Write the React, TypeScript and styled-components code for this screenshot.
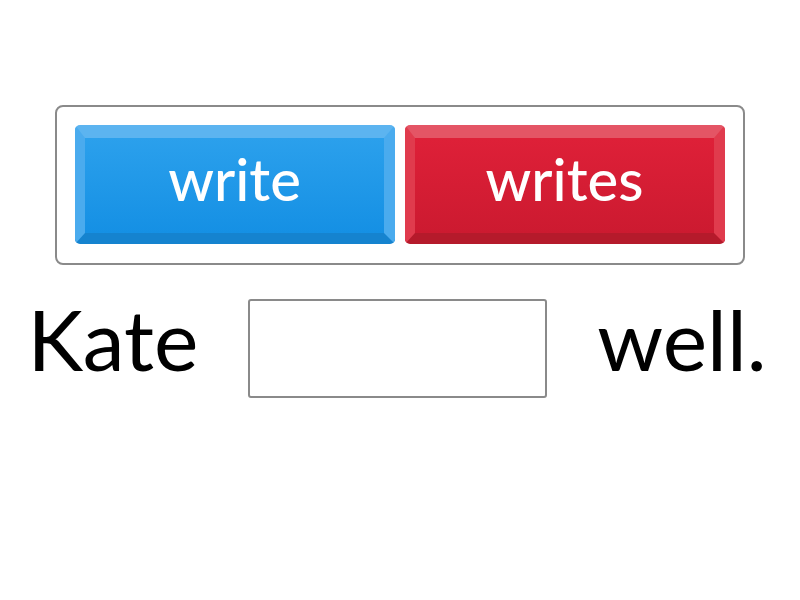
import React from "react";
import styled, { createGlobalStyle } from "styled-components";

const Global = createGlobalStyle`
  html, body { margin: 0; padding: 0; background: #ffffff; }
  body { font-family: Lato, "Open Sans", sans-serif; }
`;

const Page = styled.div`
  width: 800px;
  height: 600px;
  display: flex;
  flex-direction: column;
  align-items: center;
  padding-top: 105px;
  box-sizing: border-box;
`;

const Bank = styled.div`
  width: 690px;
  height: 160px;
  box-sizing: border-box;
  border: 2px solid #8a8a8a;
  border-radius: 8px;
  padding: 18px 18px 19px;
  display: flex;
  gap: 10px;
`;

const palettes = {
  blue: {
    top: "#5cb4f0",
    side: "#4aabee",
    bottom: "#1583cf",
    from: "#2ba0ec",
    to: "#1590e4",
  },
  red: {
    top: "#e45565",
    side: "#e03b4d",
    bottom: "#b51a2b",
    from: "#de2038",
    to: "#cc1a30",
  },
};

const Tile = styled.div<{ $tone: keyof typeof palettes }>`
  flex: 1;
  box-sizing: border-box;
  border-radius: 5px;
  border-style: solid;
  border-width: 13px 11px 11px 10px;
  border-top-color: ${(p) => palettes[p.$tone].top};
  border-left-color: ${(p) => palettes[p.$tone].side};
  border-right-color: ${(p) => palettes[p.$tone].side};
  border-bottom-color: ${(p) => palettes[p.$tone].bottom};
  background: linear-gradient(
    ${(p) => palettes[p.$tone].from},
    ${(p) => palettes[p.$tone].to}
  );
  display: flex;
  align-items: center;
  justify-content: center;
  color: #ffffff;
  font-size: 58px;
  font-weight: 500;
  line-height: 1;
  padding-bottom: 14px;
`;

const Sentence = styled.div`
  margin-top: 32px;
  padding-right: 6px;
  display: flex;
  align-items: center;
  gap: 50px;
  font-size: 84px;
  color: #000000;
  line-height: 1;
`;

const Word = styled.span`
  display: block;
  padding-bottom: 18px;
`;

const Slot = styled.div`
  width: 299px;
  height: 99px;
  box-sizing: border-box;
  border: 2px solid #8a8a8a;
  border-radius: 3px;
  background: #ffffff;
`;

export default function App() {
  return (
    <>
      <Global />
      <Page>
        <Bank>
          <Tile $tone="blue">write</Tile>
          <Tile $tone="red">writes</Tile>
        </Bank>
        <Sentence>
          <Word>Kate</Word>
          <Slot />
          <Word>well.</Word>
        </Sentence>
      </Page>
    </>
  );
}
